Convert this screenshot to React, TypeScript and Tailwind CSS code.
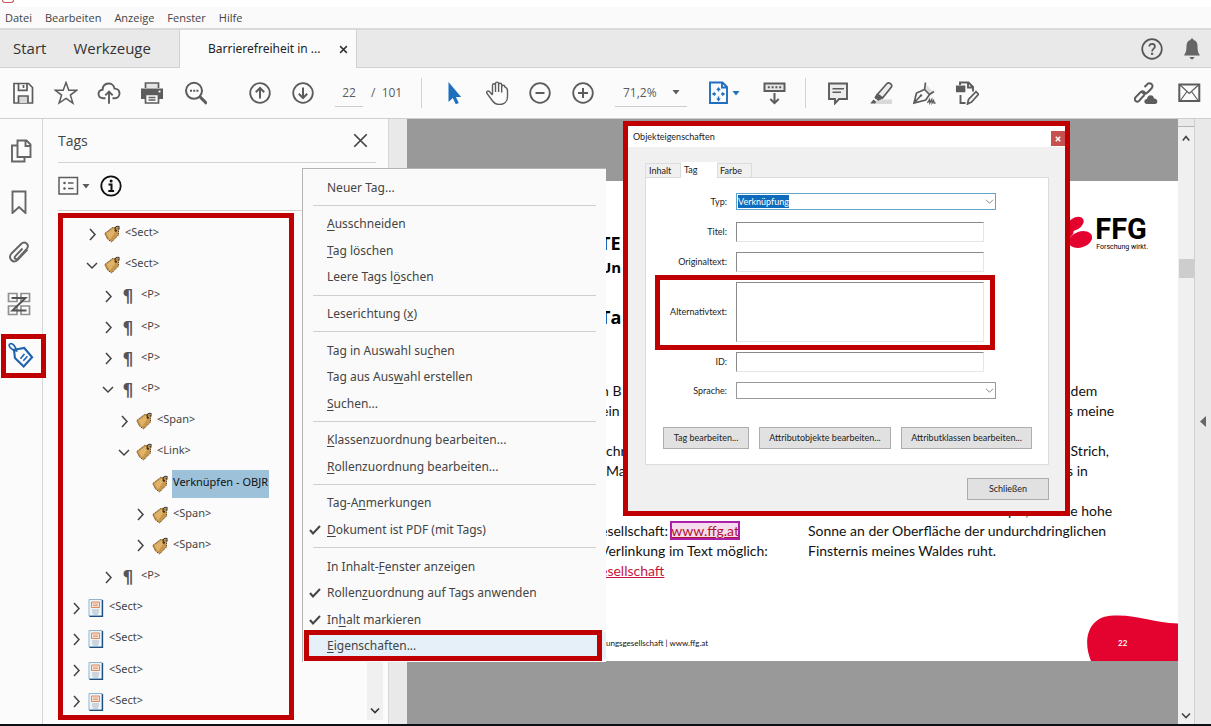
import type { ReactNode } from "react";
import clsx from "clsx";

type TreeNode = {
  label: string;
  level: number;
  icon: "tag" | "para" | "page";
  state?: "open" | "leaf";
};

const menuBar = ["Datei", "Bearbeiten", "Anzeige", "Fenster", "Hilfe"];

const treeNodes: TreeNode[] = [
  { label: "<Sect>", level: 1, icon: "tag" },
  { label: "<Sect>", level: 1, icon: "tag", state: "open" },
  { label: "<P>", level: 2, icon: "para" },
  { label: "<P>", level: 2, icon: "para" },
  { label: "<P>", level: 2, icon: "para" },
  { label: "<P>", level: 2, icon: "para", state: "open" },
  { label: "<Span>", level: 3, icon: "tag" },
  { label: "<Link>", level: 3, icon: "tag", state: "open" },
  { label: "Verknüpfen - OBJR", level: 4, icon: "tag", state: "leaf" },
  { label: "<Span>", level: 4, icon: "tag" },
  { label: "<Span>", level: 4, icon: "tag" },
  { label: "<P>", level: 2, icon: "para" },
  { label: "<Sect>", level: 0, icon: "page" },
  { label: "<Sect>", level: 0, icon: "page" },
  { label: "<Sect>", level: 0, icon: "page" },
  { label: "<Sect>", level: 0, icon: "page" },
];

const indents = ["pl-2", "pl-6", "pl-10", "pl-14", "pl-18"];

// "&" marks the mnemonic letter, "-" is a separator
const contextItems = [
  "Neuer Tag...",
  "-",
  "&Ausschneiden",
  "&Tag löschen",
  "Leere Tags l&öschen",
  "-",
  "Leserichtung (&x)",
  "-",
  "Tag in Auswahl su&chen",
  "Tag aus Aus&wahl erstellen",
  "&Suchen...",
  "-",
  "&Klassenzuordnung bearbeiten...",
  "&Rollenzuordnung bearbeiten...",
  "-",
  "Tag-A&nmerkungen",
  "&Dokument ist PDF (mit Tags)",
  "-",
  "In Inhalt-&Fenster anzeigen",
  "Rollen&zuordnung auf Tags anwenden",
  "In&halt markieren",
  "&Eigenschaften...",
];

const checkedItems = [
  "&Dokument ist PDF (mit Tags)",
  "Rollen&zuordnung auf Tags anwenden",
  "In&halt markieren",
];

function Icon({ children, size = 24, className }: { children: ReactNode; size?: number; className?: string }) {
  return (
    <svg
      width={size}
      height={size}
      viewBox="0 0 24 24"
      fill="none"
      stroke="currentColor"
      strokeWidth="1.7"
      aria-hidden="true"
      className={clsx("shrink-0", className)}
    >
      {children}
    </svg>
  );
}

function ToolButton({ label, children, className }: { label: string; children: ReactNode; className?: string }) {
  return (
    <button aria-label={label} className={clsx("flex h-10 w-[43px] shrink-0 items-center justify-center", className)}>
      <Icon>{children}</Icon>
    </button>
  );
}

function Chevron({ dir, className }: { dir: "up" | "down" | "right"; className?: string }) {
  const paths = {
    up: "M1 8 L5 3 L9 8",
    down: "M0 3 L5 8 L10 3",
    right: "M3 0 L8 5.5 L3 11",
  };
  return (
    <svg width="10" height="11" viewBox="0 0 10 11" fill="none" stroke="currentColor" className={clsx("shrink-0 overflow-visible", className)} aria-hidden="true">
      <path d={paths[dir]} />
    </svg>
  );
}

function Caret({ className }: { className?: string }) {
  return (
    <svg width="8" height="5" viewBox="0 0 8 5" fill="currentColor" className={clsx("shrink-0", className)} aria-hidden="true">
      <path d="M.5 0h7L4 4.500z" />
    </svg>
  );
}

function NodeIcon({ type }: { type: TreeNode["icon"] }) {
  if (type === "para") {
    return <span className="w-4 shrink-0 text-center font-['DejaVu_Sans'] text-[17px] leading-4 font-bold text-[#555]">¶</span>;
  }
  if (type === "page") {
    return (
      <svg width="16" height="18" viewBox="0 0 16 18" className="shrink-0" aria-hidden="true">
        <path d="M1 .5h13v16.500H1z" fill="#eef5fa" stroke="#8fb4cf" />
        <path d="M14.500 1v16.500H1.500" fill="none" stroke="#1d4f80" strokeWidth="1.300" />
        <path d="M3.500 3h8v5.500h-8z" fill="#fbe3d3" stroke="#d98a5f" />
        <path d="M5 5h5M5 6.500h5" stroke="#d98a5f" strokeWidth=".7" />
        <path d="M4 11h7M4 13h7M5 15h5" stroke="#a9b4bd" />
      </svg>
    );
  }
  return (
    <svg width="16" height="18" viewBox="0 0 16 18" className="shrink-0" aria-hidden="true">
      <path d="M.8 8.500 8.500 2.500 14.500 3 14.500 10 7.500 17 3.500 14z" fill="#c9974a" stroke="#6b4a1c" strokeDasharray="1.500 .8" />
      <path d="M2.500 8.500 9 3.800l4 .6L6 14.500z" fill="#dfb369" />
      <circle cx="11.800" cy="5.600" r="1.200" fill="#3a2a14" />
      <path d="M11.500 5.500C10 2.500 12.500.8 15 1.500v3" fill="none" stroke="#3d3424" strokeWidth="1.100" />
    </svg>
  );
}

function AppHeader() {
  return (
    <header className="shrink-0">
      <div className="h-[7px] bg-white pl-0.5">
        <div className="h-[3px] w-3 rounded-b-sm border border-t-0 border-[#c0595c]" />
      </div>
      <nav className="flex h-[23px] items-center gap-[13px] border-b-2 border-[#d9d9d9] bg-[#fafafa] pt-0.5 pl-[5px] text-[11px] text-[#444]">
        {menuBar.map((item) => (
          <button key={item}>{item}</button>
        ))}
      </nav>
      <div className="flex h-[38px] border-b border-[#d2d2d2] bg-[#e9e9e9] text-[#333]">
        <div className="flex w-[180px] items-center gap-[27px] border-r border-[#d2d2d2] pl-[13px] text-[15px]">
          <button>Start</button>
          <button>Werkzeuge</button>
        </div>
        <div className="-mb-px flex w-[177px] items-center justify-between border-r border-[#d2d2d2] bg-[#fbfbfb] pr-2 pl-7 font-['Noto_Sans'] text-xs">
          <button className="text-[#222]">Barrierefreiheit in ...</button>
          <button aria-label="Tab schließen">
            <Icon size={9}>
              <path d="M3 3 21 21M21 3 3 21" strokeWidth="4" />
            </Icon>
          </button>
        </div>
        <div className="ml-auto flex items-center gap-4 pr-[7px] text-[#555]">
          <button aria-label="Hilfe">
            <Icon>
              <circle cx="12" cy="12" r="9.800" />
              <path d="M9.300 9.600c0-3.800 5.600-3.500 5.600-.2 0 2.200-2.800 2.200-2.800 5" />
              <path d="M12.100 15.800v2" strokeWidth="2.200" />
            </Icon>
          </button>
          <button aria-label="Benachrichtigungen" className="text-[#666]">
            <Icon>
              <path d="M12 1.500c1 0 1.500.7 1.500 1.600 3 .8 4 3 4 6 0 5 .8 7 2.500 9.400H4c1.700-2.400 2.500-4.400 2.500-9.400 0-3 1-5.200 4-6 0-.9.500-1.600 1.500-1.600zM9.700 20h4.600c-.3 1.600-1.200 2.300-2.300 2.300S10 21.600 9.700 20z" fill="currentColor" stroke="none" />
            </Icon>
          </button>
        </div>
      </div>
    </header>
  );
}

function Toolbar() {
  return (
    <div className="flex h-[51px] shrink-0 items-center border-b border-[#cfcfcf] bg-[#fbfbfb] pl-px text-[#5c5c5c]">
      <ToolButton label="Speichern">
        <path d="M3 2.500h14.500l4 4V22H3z" />
        <path d="M7.500 2.500v6.800h8.500V2.500M12.500 4v3" />
        <path d="M7.500 22v-7h9.500v7" fill="#d8d8d8" />
      </ToolButton>
      <ToolButton label="Favoriten">
        <path d="m12 1.500 2.800 7.700h8l-6.400 4.900 2.500 8L12 17.300 5.100 22l2.500-7.900L1.200 9.200h8z" strokeWidth="1.500" />
      </ToolButton>
      <ToolButton label="Hochladen">
        <path d="M8.500 17.200H6.300C.2 17-.1 9 5.600 8.700 6 .6 16.500.6 17.500 7.600c6.500-.3 6.800 9.300.2 9.600h-2.200M12 22.800V11M8.300 14.300 12 10.600l3.700 3.700" strokeWidth="1.900" />
      </ToolButton>
      <ToolButton label="Drucken">
        <path d="M5.500 7V2h13v5" fill="#e4e4e4" />
        <path d="M1 7.500h22v10.500H1z" fill="currentColor" stroke="none" />
        <path d="M5.500 13.500h13v8.500h-13z" fill="#fbfbfb" />
        <path d="M8.500 16.500h7M8.500 19h7" strokeWidth="1.400" />
        <path d="M18.500 10.500h2" stroke="#fff" />
      </ToolButton>
      <ToolButton label="Suchen">
        <circle cx="11" cy="9.800" r="8" strokeWidth="2" />
        <path d="m16.800 15.600 7 7" strokeWidth="3" />
        <path d="M7 9.800h8.500" strokeWidth="2" strokeDasharray="2 1.200" />
      </ToolButton>
      <ToolButton label="Vorherige Seite" className="ml-[22px]">
        <circle cx="12" cy="12" r="9.800" strokeWidth="1.800" />
        <path d="M12 17.500v-10M7.800 11.200 12 7l4.200 4.200" strokeWidth="2" />
      </ToolButton>
      <ToolButton label="Nächste Seite">
        <circle cx="12" cy="12" r="9.800" strokeWidth="1.800" />
        <path d="M12 6.500v10M7.800 12.800 12 17l4.200-4.200" strokeWidth="2" />
      </ToolButton>
      <input aria-label="Seite" defaultValue="22" className="ml-[11px] h-7 w-7 border-b border-[#ccc] text-center text-xs outline-none" />
      <span className="ml-2 w-8 text-xs whitespace-pre">/  101</span>
      <div className="mr-[10px] ml-[18px] h-[30px] w-px bg-[#d2d2d2]" />
      <ToolButton label="Auswahl" className="text-[#1f6fc0]">
        <path d="M6.500 1v20l4.300-4 3 6.200 3-1.300-2.900-6h5.200z" fill="currentColor" stroke="none" />
      </ToolButton>
      <ToolButton label="Hand">
        <path d="M7.500 13.500V4.300c0-2 3-2 3 0V11M10.500 4.300V2.600c0-2 3.100-2 3.100 0V11M13.600 3.800c0-2 3.100-2 3.100 0V11.500M16.700 5.800c0-2 3.100-2 3.100 0 0 0 2.700 1 2.700 4v6c0 5-3.500 7.700-8 7.700-3.500 0-5.500-1.200-7.300-4L2 12.500c-1-2 1-3.200 2.400-2L7.500 14" strokeWidth="1.400" />
      </ToolButton>
      <ToolButton label="Verkleinern">
        <circle cx="12" cy="12" r="9.800" strokeWidth="1.800" />
        <path d="M7.500 12h9" strokeWidth="2" />
      </ToolButton>
      <ToolButton label="Vergrößern">
        <circle cx="12" cy="12" r="9.800" strokeWidth="1.800" />
        <path d="M7 12h10M12 7v10" strokeWidth="2" />
      </ToolButton>
      <div className="ml-[11px] flex h-7 w-18 shrink-0 items-center border-b border-[#ccc] pr-[7px] pl-2">
        <select aria-label="Zoom" className="min-w-0 flex-1 appearance-none text-xs outline-none">
          <option>71,2%</option>
        </select>
        <Caret />
      </div>
      <button aria-label="An Seite anpassen" className="mr-[9px] ml-[19px] flex w-[38px] shrink-0 items-center gap-0.5 text-[#1f6fc0]">
        <Icon>
          <path d="M4 1.500h12.500l4.500 4.500v16H4zM16 1.500V6.500h5" strokeWidth="1.900" />
          <path d="M12.500 8v2.500M12.500 15.500V18M7.500 13h2.500M15 13h2.500" strokeWidth="1.500" />
          <path d="m10.200 9 2.300-3 2.300 3zM10.200 17.500l2.300 3 2.300-3zM8.800 10.800l-3 2.200 3 2.200zM16.200 10.800l3 2.200-3 2.200z" fill="currentColor" stroke="none" />
        </Icon>
        <Caret />
      </button>
      <ToolButton label="Werkzeugleiste einblenden">
        <path d="M1.500 2.500h20v7.500h-20z" fill="#e6e6e6" strokeWidth="2" />
        <path d="M4.800 6.200h14" strokeWidth="2" strokeDasharray="2 1.800" />
        <path d="M11.500 12v10M7.300 18l4.200 4.200 4.200-4.200" strokeWidth="2" />
      </ToolButton>
      <div className="mr-[10px] ml-[9px] h-[30px] w-px bg-[#d2d2d2]" />
      <ToolButton label="Kommentar">
        <path d="M3 2.500h18v15.500h-8L9 22.300V18H3z" fill="#ececec" strokeWidth="1.900" />
        <path d="M6.500 7.800h11.500M6.500 11.300h8.500" strokeWidth="1.500" />
      </ToolButton>
      <ToolButton label="Hervorheben">
        <path d="M9 18.500h14V23H5z" fill="#d9d9d9" stroke="none" />
        <path d="m8.500 13.200 9.500-10.700c2-1.800 5.800.8 4.400 3.500L13.500 17z" fill="#ececec" />
        <path d="m7.800 13.300 5 4.200-3.500 1.800-3.500-2.500z" fill="currentColor" strokeWidth="1" />
        <path d="m4.500 18.500 2.800 2.200L6 22.500H1.200z" fill="currentColor" stroke="none" />
      </ToolButton>
      <ToolButton label="Unterschreiben">
        <path d="m14 3.500 7 7-2.500 2.500-5.300-4.800z" fill="#dedede" stroke="none" />
        <path d="M2 22 4.500 12l8-3.500 5 5-3.800 5.500zM2 22l6.500-7M13.500 1.500l-1 7M17.500 13.500l4.500-3" />
        <circle cx="9" cy="14.500" r="1.200" fill="currentColor" stroke="none" />
        <path d="m15.500 22 2-3.500.3 3.500 2-3.500.3 3.500 1.500-2.500.5 2.500h1.400" strokeWidth="1.300" />
      </ToolButton>
      <ToolButton label="Bearbeiten">
        <path d="M5 4V1.500h8.500l4.500 4.500v4.500M13 1.500V6.500h5M5.500 14v8H10.500" strokeWidth="1.900" />
        <path d="M1.800 5.300h7.700v5H1.800z" fill="currentColor" />
        <path d="m12.500 23 1-4.500 7.500-7.800 2.500 2.500L16.500 21z" fill="#fbfbfb" />
      </ToolButton>
      <ToolButton label="Link freigeben" className="ml-auto">
        <path d="M10.500 14 8 16.500c-.8.800-1 1.500-3 3.500-2.500 2-5.500-1-3.500-3.700l5-5c1.700-1.600 4-.9 4.600 1M8.500 9.500c-.7 2 1 3.800 2.800 3.300 2-.5 4-3 6.500-5.800 2-2.800-1.200-6-4-4.300L10.500 6" strokeWidth="2" />
        <path d="M13 23c-3.500-.2-3.500-5 0-5 .3-4.500 6.500-5 7-.5 4-.2 4.500 5.200 1 5.500z" fill="currentColor" stroke="none" />
      </ToolButton>
      <ToolButton label="E-Mail" className="mr-px">
        <path d="M2.300 3.500h20v16.500h-20z" strokeWidth="2" />
        <path d="m3 4 9.300 8.500L21.500 4M3 20l7-9.500M21.500 20l-7-9.500" strokeWidth="1.200" />
      </ToolButton>
    </div>
  );
}

function SideRail() {
  return (
    <aside className="flex w-[43px] shrink-0 flex-col border-r border-[#d6d6d6] pt-[6px] text-[#666]">
      <button aria-label="Seiten" className="flex h-[51px] items-center justify-center">
        <Icon>
          <path d="M8.500 1.500h9l4 4v12.500h-13zM16.500 1.500V7h5M8 6.500H3v16h12.500V18.500" strokeWidth="1.900" />
        </Icon>
      </button>
      <button aria-label="Lesezeichen" className="flex h-[51px] items-center justify-center pr-1">
        <Icon>
          <path d="M5.500 1.500h13V23L12 17l-6.500 6z" strokeWidth="1.900" />
        </Icon>
      </button>
      <button aria-label="Anlagen" className="flex h-[51px] items-center justify-center pr-1">
        <Icon>
          <path d="m15.500 7.500-7.200 7.700c-1.800 2 .8 4.200 2.500 2.400l8.700-9.400c3.800-4.500-1.700-9-5.400-5.200L4.500 12.500C.5 17.200 6 23 10.500 19l10-10.500" strokeWidth="1.900" />
        </Icon>
      </button>
      <button aria-label="Reihenfolge" className="flex h-[51px] items-center justify-center pr-1 text-[#909090]">
        <Icon>
          <path d="M1.500 1.500h8.500v8H1.500zM14 1.500h8.500v8H14zM1.500 14h8.500v8.500H1.500zM14 14h8.500v8.500H14z" />
          <path d="M4.500 6h14L5.500 18.500h14" stroke="#555" strokeWidth="2" />
        </Icon>
      </button>
      <button aria-label="Tags" className="relative flex h-[51px] items-center justify-center text-[#1f62ad]">
        <Icon size={28}>
          <path d="m6 7.500.8 7 7.500 7.300 7.200-7.800-6.700-8z" strokeWidth="1.800" />
          <path d="M8.300 8.500C4 8 .3 4 2.500 2.500c2-1.200 4.500 1.500 5.800 6zM11.500 15.200l3.500-4M14 17l3.500-4" strokeWidth="1.400" />
        </Icon>
        <span className="absolute top-[5px] left-px h-11 w-[45px] border-5 border-[#c00000]" />
      </button>
    </aside>
  );
}

function TagsPanel() {
  return (
    <section className="flex w-[346px] shrink-0 flex-col border-r border-[#d6d6d6] pl-[15px]">
      <div className="mr-3 flex h-11 items-center justify-between border-b border-[#d2d2d2] pr-2 text-[#444]">
        <h2 className="text-sm">Tags</h2>
        <button aria-label="Bereich schließen">
          <Icon size={15}>
            <path d="M2 2 22 22M22 2 2 22" strokeWidth="2.800" />
          </Icon>
        </button>
      </div>
      <div className="flex h-12 items-center gap-[10px] border-b border-[#d2d2d2] pb-px text-[#5c5c5c]">
        <button aria-label="Optionen" className="flex items-center gap-[3px]">
          <svg width="21" height="20" viewBox="0 0 21 20" fill="none" stroke="currentColor" strokeWidth="1.500" aria-hidden="true">
            <path d="M1 1.500h18.500v16.500H1zM10 7h5.500M10 12.500h5.500" />
            <circle cx="6.500" cy="7" r="1.300" fill="currentColor" stroke="none" />
            <circle cx="6.500" cy="12.500" r="1.300" fill="currentColor" stroke="none" />
          </svg>
          <Caret />
        </button>
        <button aria-label="Info" className="text-[#111]">
          <Icon size={24}>
            <circle cx="11" cy="12" r="9.700" strokeWidth="1.800" />
            <path d="M8.500 10.500h3v6.500M8.300 17h5.800" strokeWidth="2" />
            <circle cx="11.100" cy="7" r="1.500" fill="currentColor" stroke="none" />
          </Icon>
        </button>
      </div>
      <div className="mt-0.5 mb-1 flex min-h-0 flex-1 justify-between pr-[5px]">
        <ul className="flex w-[236px] flex-col justify-between border-5 border-[#c00000] pt-[3px] font-['Noto_Sans'] text-[11px] text-[#444]">
          {treeNodes.map((node, i) => (
            <li key={i} className={clsx("flex h-[26px] items-center", indents[node.level])}>
              {node.state === "leaf" ? (
                <span className="w-[10px]" />
              ) : (
                <button aria-label={node.state === "open" ? "Zuklappen" : "Aufklappen"}>
                  <Chevron dir={node.state === "open" ? "down" : "right"} className="stroke-[1.5]" />
                </button>
              )}
              <span className="mr-1 ml-[7px] flex">
                <NodeIcon type={node.icon} />
              </span>
              <span className={clsx("h-7 pr-px pl-px leading-6", node.state === "leaf" && "bg-[#9cc1d9] text-[#111]")}>{node.label}</span>
            </li>
          ))}
        </ul>
        <div className="flex w-4 flex-col items-center justify-end bg-[#f0f0f0] pb-1 text-[#333]">
          <Chevron dir="down" className="w-2 stroke-2" />
        </div>
      </div>
    </section>
  );
}

function FfgLogo() {
  return (
    <div className="flex items-start">
      <svg width="40" height="36" viewBox="0 0 40 36" fill="#e4032e" aria-hidden="true">
        <ellipse cx="20" cy="9" rx="9.500" ry="6" transform="rotate(-32 20 9)" />
        <ellipse cx="25.500" cy="24.500" rx="12" ry="8" transform="rotate(-18 25.500 24.500)" />
        <path d="M12 12l7 3-1 4-5 6z" />
      </svg>
      <div className="font-['Roboto'] text-black">
        <div className="text-[29px] leading-7 font-bold">FFG</div>
        <div className="pl-px text-[7px] leading-2">Forschung wirkt.</div>
      </div>
    </div>
  );
}

function DocumentPage() {
  return (
    <main className="flex min-w-0 flex-1 flex-col bg-[#999] pt-[62px] pb-[63px]">
      <article className="relative flex flex-1 flex-col overflow-hidden bg-white pl-[193px] font-['Lato'] text-sm leading-5 text-[#111]">
        <div className="flex h-[200px] justify-between pt-[34px] pr-[30px]">
          <div className="font-['Open_Sans'] font-bold text-black">
            <h1 className="pt-4 text-lg leading-6">TE</h1>
            <p className="text-[15px] leading-6">Un</p>
            <h2 className="pt-[26px] text-lg leading-6">Ta</h2>
          </div>
          <FfgLogo />
        </div>
        <div className="flex">
          <div className="w-[208px] shrink-0">
            <p className="h-10 pl-px">
              n B
              <br />
              ein
            </p>
            <p className="mt-5 h-10 pl-[6px]">
              chr
              <br />
              Ma
            </p>
            <p className="mt-10 whitespace-nowrap">
              esellschaft:{" "}
              <a href="#ffg" className="bg-[#f5dcee] text-[#b3122f] underline outline-2 -outline-offset-1 outline-[#b01fa8]">
                www.ffg.at
              </a>
              <br />
              Verlinkung im Text möglich:
              <br />
              <a href="#gesellschaft" className="text-[#c8143c] underline">
                esellschaft
              </a>
            </p>
          </div>
          <div className="whitespace-nowrap">
            <p className="h-10 pl-[259px]">
              {"\u00a0"}dem
              <br />s meine
            </p>
            <p className="mt-5 h-10 pl-[259px]">
              {"\u00a0"}Strich,
              <br />s in
            </p>
            <p className="mt-5">
              Wenn das liebe Tal um mich dampft, und die hohe
              <br />
              Sonne an der Oberfläche der undurchdringlichen
              <br />
              Finsternis meines Waldes ruht.
            </p>
          </div>
        </div>
        <footer className="mt-auto pb-2 pl-[6px] text-[8px] leading-5">ungsgesellschaft | www.ffg.at</footer>
        <div className="absolute right-0 bottom-0">
          <svg width="92" height="46" viewBox="0 0 92 46" fill="#e4032e" className="block" aria-hidden="true">
            <path d="M5 46C-4 24 3 3 24 .8 50-1.500 66 8 92 8.500V46z" />
          </svg>
          <span className="absolute top-[18px] left-8 text-[8px] leading-5 font-bold text-white">22</span>
        </div>
      </article>
    </main>
  );
}

function ContextMenu() {
  return (
    <div role="menu" className="absolute top-[49px] bottom-[62px] left-[302px] flex w-[304px] flex-col border-t border-l border-[#b5b5b5] bg-[#fafafa] pt-[5px] pb-[3px] font-['Noto_Sans'] text-xs text-[#444]">
      {contextItems.map((item, i) => {
        if (item === "-") {
          return (
            <div key={i} role="separator" className="flex h-[10px] shrink-0 items-center pr-[10px] pl-[10px]">
              <div className="h-px w-full bg-[#cfcfcf]" />
            </div>
          );
        }
        const [before, rest] = item.includes("&") ? item.split("&") : [item, ""];
        const last = i === contextItems.length - 1;
        return (
          <button key={i} role="menuitem" className={clsx("relative flex flex-1 items-center pt-px text-left", last && "bg-[#e5f0f9]")}>
            <span className="flex w-6 justify-center pr-px">
              {checkedItems.includes(item) && (
                <Icon size={12}>
                  <path d="m2 12 6 7L22 4" strokeWidth="4" />
                </Icon>
              )}
            </span>
            <span>
              {before}
              <u className="underline-offset-2">{rest.charAt(0)}</u>
              {rest.slice(1)}
            </span>
            {last && <span className="absolute -inset-y-0.5 right-1 left-px border-5 border-[#c00000]" />}
          </button>
        );
      })}
    </div>
  );
}

const fieldBox = "ml-[9px] w-[248px] border border-t-[#8a8a8a] border-l-[#8a8a8a] border-r-[#e6e6e6] border-b-[#e6e6e6] bg-white px-1 outline-none";
const dialogButton = "h-[22px] border border-[#adadad] bg-[#e1e1e1] text-center whitespace-nowrap";

function FieldRow({ label, htmlFor, children }: { label: string; htmlFor: string; children: ReactNode }) {
  return (
    <div className="flex items-center">
      <label htmlFor={htmlFor} className="w-[81px] text-right">
        {label}
      </label>
      {children}
    </div>
  );
}

function PropertiesDialog() {
  return (
    <div role="dialog" aria-label="Objekteigenschaften" className="absolute top-[2px] left-[623px] w-[447px] border-5 border-[#c00000] bg-[#f0f0f0] font-['Lato'] text-[9px] text-[#222]">
      <div className="flex h-[21px] items-center justify-between bg-white pl-[5px]">
        <h2>Objekteigenschaften</h2>
        <button aria-label="Schließen" className="mt-1 flex h-[15px] w-[14px] items-center justify-center bg-[#c75050] text-white">
          <Icon size={6}>
            <path d="M3 3 21 21M21 3 3 21" strokeWidth="6" />
          </Icon>
        </button>
      </div>
      <div className="px-4 pt-[15px] pb-[11px]">
        <div role="tablist" className="relative z-10 -mb-px flex items-end pl-px">
          <button role="tab" className="h-[15px] w-9 border border-b-0 border-[#dcdcdc] pl-[3px] text-left">
            Inhalt
          </button>
          <button role="tab" aria-selected="true" className="h-4 w-9 bg-white pl-[3px] text-left">
            Tag
          </button>
          <button role="tab" className="h-[15px] w-[35px] border border-b-0 border-[#dcdcdc] pl-[2px] text-left">
            Farbe
          </button>
        </div>
        <div className="ml-px border border-[#dcdcdc] bg-white py-[15px]">
          <FieldRow label="Typ:" htmlFor="typ">
            <div className="ml-[9px] flex h-[17px] w-[260px] items-center justify-between border border-[#5fa5c9] px-px pr-0.5">
              <select id="typ" className="h-[13px] appearance-none bg-[#0f6cbd] text-white outline-none">
                <option>Verknüpfung</option>
              </select>
              <Chevron dir="down" className="w-[7px] text-[#555]" />
            </div>
          </FieldRow>
          <div className="mt-3 flex flex-col gap-[10px]">
            <FieldRow label="Titel:" htmlFor="titel">
              <input id="titel" className={clsx(fieldBox, "h-5")} />
            </FieldRow>
            <FieldRow label="Originaltext:" htmlFor="originaltext">
              <input id="originaltext" className={clsx(fieldBox, "h-5")} />
            </FieldRow>
            <div className="relative">
              <FieldRow label="Alternativtext:" htmlFor="alternativtext">
                <textarea id="alternativtext" className={clsx(fieldBox, "h-15 resize-none")} />
              </FieldRow>
              <span className="pointer-events-none absolute -top-[7px] -bottom-[8px] left-[9px] w-[340px] border-5 border-[#c00000]" />
            </div>
            <FieldRow label="ID:" htmlFor="id">
              <input id="id" className={clsx(fieldBox, "h-5")} />
            </FieldRow>
            <FieldRow label="Sprache:" htmlFor="sprache">
              <div className="ml-[9px] flex h-[17px] w-[260px] items-center border border-[#999] pr-0.5">
                <select id="sprache" className="flex-1 appearance-none outline-none">
                  <option></option>
                </select>
                <Chevron dir="down" className="w-[7px] text-[#555]" />
              </div>
            </FieldRow>
          </div>
          <div className="mt-7 flex gap-[10px] pl-[17px]">
            <button className={clsx(dialogButton, "w-[86px]")}>Tag bearbeiten...</button>
            <button className={clsx(dialogButton, "w-[132px]")}>Attributobjekte bearbeiten...</button>
            <button className={clsx(dialogButton, "w-[131px]")}>Attributklassen bearbeiten...</button>
          </div>
        </div>
        <div className="mt-[13px] flex justify-end">
          <button className={clsx(dialogButton, "w-[82px]")}>Schließen</button>
        </div>
      </div>
    </div>
  );
}

export default function App() {
  return (
    <div className="flex h-screen flex-col overflow-hidden border-b-2 border-[#0c0f14] bg-[#fbfbfb] font-['Open_Sans',sans-serif]">
      <AppHeader />
      <Toolbar />
      <div className="relative flex min-h-0 flex-1">
        <SideRail />
        <TagsPanel />
        <div className="w-[18px] shrink-0 bg-[#e9e9e9]" />
        <DocumentPage />
        <div className="flex w-[17px] shrink-0 flex-col items-center border-r border-[#d0d0d0] bg-[#f0f0f0] text-[#444]">
          <div className="h-2 w-full border-b border-[#b5b5b5] bg-[#e9e9e9]" />
          <Chevron dir="up" className="mt-[6px] w-2 stroke-2" />
          <div className="mt-[115px] h-[19px] w-[15px] bg-[#cdcdcd]" />
          <Chevron dir="down" className="mt-auto mb-[3px] w-2 stroke-2" />
        </div>
        <button aria-label="Werkzeugfenster einblenden" className="flex w-4 shrink-0 items-center justify-center bg-[#e9e9e9] text-[#666]">
          <svg width="6" height="11" viewBox="0 0 6 11" fill="currentColor" aria-hidden="true">
            <path d="M6 0v11L0 5.500z" />
          </svg>
        </button>
        <ContextMenu />
        <PropertiesDialog />
      </div>
    </div>
  );
}
